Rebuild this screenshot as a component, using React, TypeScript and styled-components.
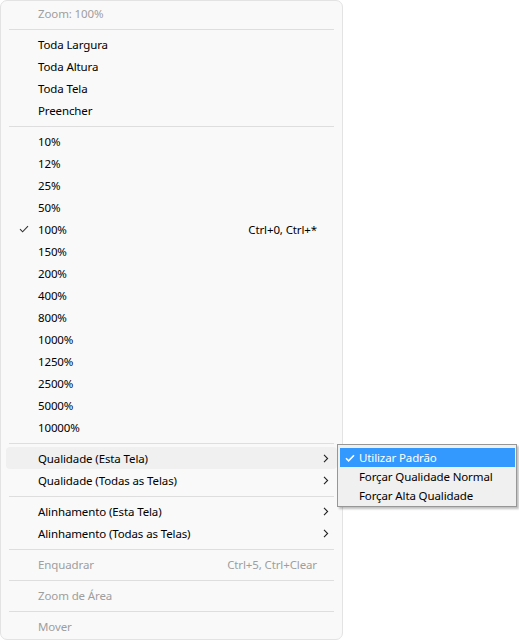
import React from "react";
import styled, { createGlobalStyle } from "styled-components";

const Global = createGlobalStyle`
  html, body { margin: 0; padding: 0; background: #ffffff; }
  body {
    font-family: "Noto Sans", "Open Sans", sans-serif;
    font-size: 11.5px;
    letter-spacing: -0.12px;
  }
`;

const Stage = styled.div`
  position: relative;
  width: 519px;
  height: 641px;
`;

const Menu = styled.div`
  box-sizing: border-box;
  width: 343px;
  height: 640px;
  background: #f9f9f9;
  border: 1px solid #e3e3e3;
  border-radius: 7px;
  padding: 1px 5px 0;
  display: flex;
  flex-direction: column;
`;

const Row = styled.div<{ $disabled?: boolean; $hover?: boolean }>`
  height: 22px;
  display: grid;
  grid-template-columns: 32px 1fr auto 19px;
  align-items: center;
  border-radius: 4px;
  color: ${(p) => (p.$disabled ? "#9e9e9e" : "#000000")};
  background: ${(p) => (p.$hover ? "#f0f0f0" : "transparent")};
  white-space: nowrap;
`;

const CheckCell = styled.span`
  display: flex;
  align-items: center;
  justify-content: center;
  padding-left: 3px;
`;

const Label = styled.span`
  line-height: 20px;
  padding-top: 2px;
`;

const Shortcut = styled.span`
  line-height: 20px;
  padding-top: 2px;
  margin-right: 1px;
`;

const Arrow = styled.span`
  display: flex;
  align-items: center;
  justify-content: center;
  padding-right: 4px;
  padding-top: 1px;
`;

const Sep = styled.div`
  height: 1px;
  background: #dedede;
  margin: 5px 3px 3px;
`;

const Sub = styled.div`
  position: absolute;
  left: 337px;
  top: 444px;
  width: 180px;
  box-sizing: border-box;
  background: #f0f0f0;
  border: 1px solid #979797;
  box-shadow: 2px 2px 2px rgba(0, 0, 0, 0.25);
  padding: 3px 1px 1px 2px;
  display: flex;
  flex-direction: column;
`;

const SubRow = styled.div<{ $active?: boolean }>`
  height: 19px;
  display: grid;
  grid-template-columns: 19px 1fr;
  align-items: center;
  color: ${(p) => (p.$active ? "#ffffff" : "#000000")};
  background: ${(p) => (p.$active ? "#3399ff" : "transparent")};
  white-space: nowrap;
`;

const SubLabel = styled.span`
  line-height: 18px;
  padding-top: 1px;
`;

const SubCheck = styled.span`
  display: flex;
  align-items: center;
  justify-content: center;
  padding-left: 1px;
`;

const Check = ({ color = "#333", w = 1.1 }: { color?: string; w?: number }) => (
  <svg width="10" height="8" viewBox="0 0 10 8">
    <path d="M1 4.2 L3.6 6.8 L9 1.2" fill="none" stroke={color} strokeWidth={w} />
  </svg>
);

const Chevron = () => (
  <svg width="6" height="9" viewBox="0 0 6 9">
    <path d="M1 0.8 L4.6 4.5 L1 8.2" fill="none" stroke="#222" strokeWidth="1.1" />
  </svg>
);

type Item = {
  label: string;
  disabled?: boolean;
  checked?: boolean;
  shortcut?: string;
  sub?: boolean;
  hover?: boolean;
};

const groups: Item[][] = [
  [{ label: "Zoom: 100%", disabled: true }],
  [
    { label: "Toda Largura" },
    { label: "Toda Altura" },
    { label: "Toda Tela" },
    { label: "Preencher" },
  ],
  [
    { label: "10%" },
    { label: "12%" },
    { label: "25%" },
    { label: "50%" },
    { label: "100%", checked: true, shortcut: "Ctrl+0, Ctrl+*" },
    { label: "150%" },
    { label: "200%" },
    { label: "400%" },
    { label: "800%" },
    { label: "1000%" },
    { label: "1250%" },
    { label: "2500%" },
    { label: "5000%" },
    { label: "10000%" },
  ],
  [
    { label: "Qualidade (Esta Tela)", sub: true, hover: true },
    { label: "Qualidade (Todas as Telas)", sub: true },
  ],
  [
    { label: "Alinhamento (Esta Tela)", sub: true },
    { label: "Alinhamento (Todas as Telas)", sub: true },
  ],
  [{ label: "Enquadrar", disabled: true, shortcut: "Ctrl+5, Ctrl+Clear" }],
  [{ label: "Zoom de Área", disabled: true }],
  [{ label: "Mover", disabled: true }],
];

const subItems = [
  { label: "Utilizar Padrão", active: true },
  { label: "Forçar Qualidade Normal" },
  { label: "Forçar Alta Qualidade" },
];

export default function App() {
  return (
    <Stage>
      <Global />
      <Menu>
        {groups.map((g, gi) => (
          <React.Fragment key={gi}>
            {gi > 0 && <Sep />}
            {g.map((it) => (
              <Row key={it.label} $disabled={it.disabled} $hover={it.hover}>
                <CheckCell>{it.checked && <Check />}</CheckCell>
                <Label>{it.label}</Label>
                <Shortcut>{it.shortcut ?? ""}</Shortcut>
                <Arrow>{it.sub && <Chevron />}</Arrow>
              </Row>
            ))}
          </React.Fragment>
        ))}
      </Menu>
      <Sub>
        {subItems.map((s) => (
          <SubRow key={s.label} $active={s.active}>
            <SubCheck>{s.active && <Check color="#fff" w={1.6} />}</SubCheck>
            <SubLabel>{s.label}</SubLabel>
          </SubRow>
        ))}
      </Sub>
    </Stage>
  );
}
